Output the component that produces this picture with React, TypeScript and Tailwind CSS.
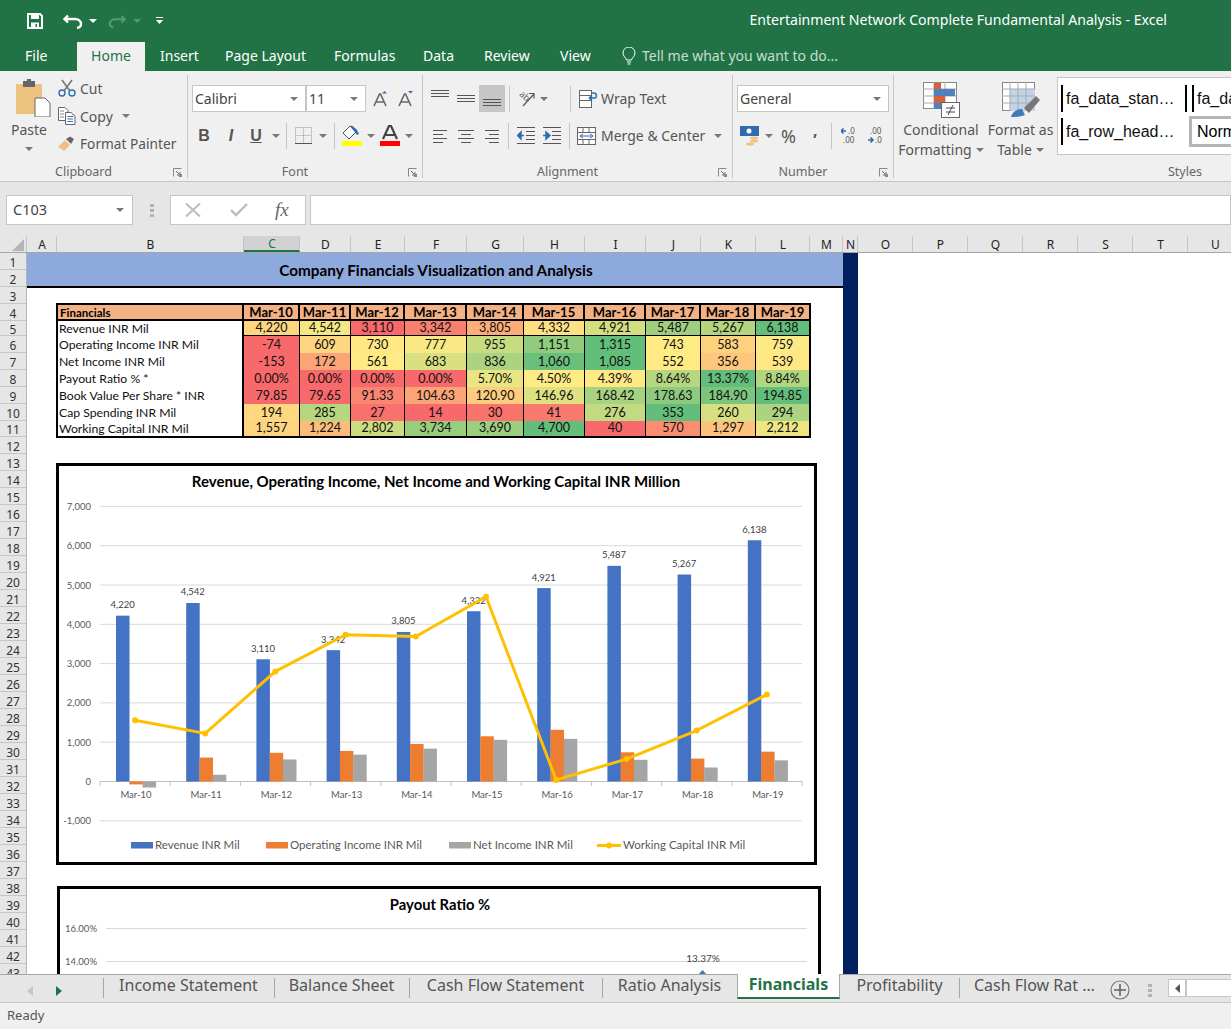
import React from "react";

const Caret = ({ c = "#777" }: { c?: string }) => (
  <svg width="8" height="4" viewBox="0 0 8 4" className="shrink-0"><path d="M0 0h8L4 4z" fill={c} /></svg>
);
const Sep = ({ h = "h-[26px]" }: { h?: string }) => <div className={`w-[1px] bg-[#c6c6c6] ${h}`} />;

const Launcher = () => (
  <svg width="9" height="9" viewBox="0 0 9 9"><path d="M0.5 8.5V0.5H8.5" fill="none" stroke="#888" /><path d="M3 3L7 7M7 4V7H4" fill="none" stroke="#666" /><rect x="6" y="6" width="3" height="3" fill="#888" /></svg>
);

const Group = ({ w, label, launcher = true, children }: { w: string; label: string; launcher?: boolean; children: React.ReactNode }) => (
  <div className={`flex flex-col shrink-0 relative ${w}`}>
    <div className="h-[91px]">{children}</div>
    <div className="h-[20px] flex items-center text-[12.5px] text-[#666] pt-[3px]">
      <span className="flex-1 text-center">{label}</span>
      {launcher && <span className="w-[20px] flex justify-center"><Launcher /></span>}
    </div>
  </div>
);

const RibbonSep = () => <div className="w-[1px] shrink-0 bg-[#c6c6c6] mt-[4px] h-[103px]" />;

const Combo = ({ w, text }: { w: string; text: string }) => (
  <div className={`h-[27px] bg-white border border-[#c6c6c6] flex items-center pl-[2px] pr-[7px] justify-between text-[14px] text-[#444] ${w}`}>
    <span>{text}</span>
    <Caret />
  </div>
);

const Lines = ({ ys, x1, x2 }: { ys: number[]; x1: number[]; x2: number[] }) => (
  <>
    {ys.map((y, i) => (
      <path key={i} d={`M${x1[i]} ${y + 0.5}H${x2[i]}`} stroke="#555" strokeWidth="1" />
    ))}
  </>
);

const AlignV = ({ ys }: { ys: number[] }) => (
  <svg width="18" height="18" viewBox="0 0 18 18"><Lines ys={ys} x1={[0, 0, 0]} x2={[18, 18, 18]} /></svg>
);
const AlignH = ({ x1, x2, w }: { x1: number[]; x2: number[]; w: number }) => (
  <svg width={w} height="14" viewBox={`0 0 ${w} 14`}><Lines ys={[1, 5, 9, 13]} x1={x1} x2={x2} /></svg>
);
const Indent = ({ flip }: { flip?: boolean }) => (
  <svg width="18" height="17" viewBox="0 0 18 17">
    <path d="M0 0.5H18M9 4.5H18M9 8.5H18M9 12.5H18M0 16.5H18" stroke="#555" fill="none" />
    {flip ? <path d="M0 8.5H5M3 5L7 8.5L3 12Z" stroke="#2f6db0" fill="#2f6db0" strokeWidth="1.5" /> : <path d="M7 8.5H2M4 5L0.5 8.5L4 12Z" stroke="#2f6db0" fill="#2f6db0" strokeWidth="1.5" />}
  </svg>
);

const Mono = "font-['Lato',sans-serif]";

const rows: { label: string; vals: number[]; text: string[] }[] = [
  { label: "Revenue INR Mil", vals: [4220, 4542, 3110, 3342, 3805, 4332, 4921, 5487, 5267, 6138], text: ["4,220", "4,542", "3,110", "3,342", "3,805", "4,332", "4,921", "5,487", "5,267", "6,138"] },
  { label: "Operating Income INR Mil", vals: [-74, 609, 730, 777, 955, 1151, 1315, 743, 583, 759], text: ["-74", "609", "730", "777", "955", "1,151", "1,315", "743", "583", "759"] },
  { label: "Net Income INR Mil", vals: [-153, 172, 561, 683, 836, 1060, 1085, 552, 356, 539], text: ["-153", "172", "561", "683", "836", "1,060", "1,085", "552", "356", "539"] },
  { label: "Payout Ratio % *", vals: [0, 0, 0, 0, 5.7, 4.5, 4.39, 8.64, 13.37, 8.84], text: ["0.00%", "0.00%", "0.00%", "0.00%", "5.70%", "4.50%", "4.39%", "8.64%", "13.37%", "8.84%"] },
  { label: "Book Value Per Share * INR", vals: [79.85, 79.65, 91.33, 104.63, 120.9, 146.96, 168.42, 178.63, 184.9, 194.85], text: ["79.85", "79.65", "91.33", "104.63", "120.90", "146.96", "168.42", "178.63", "184.90", "194.85"] },
  { label: "Cap Spending INR Mil", vals: [194, 285, 27, 14, 30, 41, 276, 353, 260, 294], text: ["194", "285", "27", "14", "30", "41", "276", "353", "260", "294"] },
  { label: "Working Capital INR Mil", vals: [1557, 1224, 2802, 3734, 3690, 4700, 40, 570, 1297, 2212], text: ["1,557", "1,224", "2,802", "3,734", "3,690", "4,700", "40", "570", "1,297", "2,212"] },
];

const mix = (a: number[], b: number[], t: number) => {
  const c = a.map((v, i) => Math.round(v + (b[i] - v) * t));
  return `rgb(${c[0]},${c[1]},${c[2]})`;
};
const scale = (vals: number[], v: number) => {
  const s = [...vals].sort((x, y) => x - y);
  const min = s[0], max = s[s.length - 1], med = (s[4] + s[5]) / 2;
  const R = [248, 105, 107], Y = [255, 235, 132], G = [99, 190, 123];
  return v <= med ? mix(R, Y, (v - min) / (med - min || 1)) : mix(Y, G, (v - med) / (max - med || 1));
};

const years = ["Mar-10", "Mar-11", "Mar-12", "Mar-13", "Mar-14", "Mar-15", "Mar-16", "Mar-17", "Mar-18", "Mar-19"];
const cols: [string, number][] = [["A", 30], ["B", 187], ["C", 56], ["D", 51], ["E", 54], ["F", 62], ["G", 57], ["H", 61], ["I", 61], ["J", 55], ["K", 55], ["L", 54], ["M", 33], ["N", 15], ["O", 55], ["P", 55], ["Q", 55], ["R", 55], ["S", 55], ["T", 55], ["U", 55]];
const rowHeights = Array.from({ length: 43 }, (_, i) => (i === 4 ? 15 : i === 10 ? 16 : 17));
const gridCols = "grid grid-cols-[186px_56px_51px_54px_62px_57px_61px_61px_55px_55px_53px]";

const Y = (v: number) => 781.5 - v * 0.0393;
const catX = (i: number) => 100 + 70.2 * i;

const Chart1 = () => {
  const rev = rows[0], op = rows[1], net = rows[2], wc = rows[6];
  const bar = (i: number, v: number, off: number, c: string, w = 13.5) => (
    <rect key={`${c}${i}`} x={catX(i) + off} y={Math.min(Y(v), Y(0))} width={w} height={Math.abs(v * 0.0393)} fill={c} />
  );
  const pts = wc.vals.map((v, i) => `${catX(i) + 35},${Y(v)}`).join(" ");
  return (
    <svg width="755" height="396" viewBox="59 466 755 396" className={`block ${Mono}`}>
      <text x="436" y="487" textAnchor="middle" fontSize="15" fontWeight="700" fill="#000">Revenue, Operating Income, Net Income and Working Capital INR Million</text>
      {[7000, 6000, 5000, 4000, 3000, 2000, 1000, 0, -1000].map((v) => (
        <g key={v}>
          <path d={`M100 ${Y(v)}H802`} stroke={v === 0 ? "#bfbfbf" : "#d9d9d9"} strokeWidth="1" />
          <text x="91" y={Y(v) + 3.5} textAnchor="end" fontSize="9.5" fill="#595959">{v < 0 ? "-1,000" : v === 0 ? "0" : `${v / 1000},000`}</text>
        </g>
      ))}
      {Array.from({ length: 11 }, (_, i) => <path key={i} d={`M${catX(i)} 781.5V786`} stroke="#bfbfbf" />)}
      {rev.vals.map((v, i) => bar(i, v, 16, "#4472c4"))}
      {op.vals.map((v, i) => bar(i, v, 29.3, "#ed7d31"))}
      {net.vals.map((v, i) => bar(i, v, 42.6, "#a5a5a5"))}
      {years.map((y, i) => <text key={y} x={catX(i) + 36} y="798" textAnchor="middle" fontSize="9.5" fill="#595959">{y}</text>)}
      {rev.vals.map((v, i) => <text key={i} x={catX(i) + 22.6} y={Y(v) - 7.5} textAnchor="middle" fontSize="9.5" fill="#404040">{rev.text[i]}</text>)}
      <polyline points={pts} fill="none" stroke="#ffc000" strokeWidth="3" strokeLinejoin="round" strokeLinecap="round" />
      {wc.vals.map((v, i) => <circle key={i} cx={catX(i) + 35} cy={Y(v)} r="3" fill="#ffc000" />)}
      <rect x="131" y="842" width="22" height="6.5" fill="#4472c4" />
      <text x="155" y="849" fontSize="11.5" fill="#595959">Revenue INR Mil</text>
      <rect x="266" y="842" width="22" height="6.5" fill="#ed7d31" />
      <text x="290" y="849" fontSize="11.5" fill="#595959">Operating Income INR Mil</text>
      <rect x="449" y="842" width="22" height="6.5" fill="#a5a5a5" />
      <text x="473" y="849" fontSize="11.5" fill="#595959">Net Income INR Mil</text>
      <path d="M597 845.5H621" stroke="#ffc000" strokeWidth="3" />
      <circle cx="609" cy="845.5" r="3" fill="#ffc000" />
      <text x="623" y="849" fontSize="11.5" fill="#595959">Working Capital INR Mil</text>
    </svg>
  );
};

const Chart2 = () => (
  <svg width="758" height="200" viewBox="60 889 758 200" className={`block ${Mono}`}>
    <text x="440" y="910" textAnchor="middle" fontSize="14.8" fontWeight="700" fill="#000">Payout Ratio %</text>
    {[[928.5, "16.00%"], [961.5, "14.00%"]].map(([y, t]) => (
      <g key={t as string}>
        <path d={`M106 ${y}H807`} stroke="#d9d9d9" />
        <text x="97" y={(y as number) + 3.5} textAnchor="end" fontSize="9.5" fill="#595959">{t}</text>
      </g>
    ))}
    <text x="703" y="961.5" textAnchor="middle" fontSize="10" fill="#404040">13.37%</text>
    <path d="M702.5 970L708 976L702.5 982L697 976Z" fill="#4472c4" />
  </svg>
);

const tabs: [string, string][] = [["Income Statement", "w-[171px]"], ["Balance Sheet", "w-[135px]"], ["Cash Flow Statement", "w-[193px]"], ["Ratio Analysis", "w-[135px]"]];

export default function App() {
  return (
    <div className="w-[1231px] h-[1029px] overflow-hidden flex flex-col bg-[#e6e6e6] font-['Noto_Sans',sans-serif] text-[14px] text-[#444]">
      {/* Title bar */}
      <div className="h-[42px] shrink-0 bg-[#217346] flex items-center pl-[27px] pr-[64px] text-white">
        <svg width="16" height="16" viewBox="0 0 16 16" className="shrink-0">
          <path d="M1 1H13L15 3V15H1Z" fill="none" stroke="#fff" strokeWidth="2" />
          <rect x="4" y="1" width="8" height="5" fill="#fff" />
          <rect x="4" y="9.5" width="8" height="5" fill="#fff" />
          <rect x="8.5" y="11" width="1.5" height="3" fill="#217346" />
        </svg>
        <svg width="20" height="15" viewBox="0 0 20 15" className="ml-[20px] shrink-0">
          <path d="M5 1.5L1.5 5L5 8.5M2 5H12C15.5 5 18 7 18 10C18 12 16.5 13.5 14 14" fill="none" stroke="#fff" strokeWidth="2.4" />
        </svg>
        <span className="ml-[6px]"><Caret c="#fff" /></span>
        <svg width="18" height="15" viewBox="0 0 20 15" className="ml-[11px] shrink-0">
          <path d="M15 1.5L18.5 5L15 8.5M18 5H8C4.5 5 2 7 2 10C2 12 3.5 13.5 6 14" fill="none" stroke="#4f9a74" strokeWidth="2.4" />
        </svg>
        <span className="ml-[7px]"><Caret c="#4f9a74" /></span>
        <svg width="7" height="8" viewBox="0 0 7 8" className="ml-[15px] shrink-0"><path d="M0 0.5H7" stroke="#fff" /><path d="M0 3H7L3.5 7Z" fill="#fff" /></svg>
        <span className="ml-auto text-[14.1px] -mt-[3px]">Entertainment Network Complete Fundamental Analysis - Excel</span>
      </div>
      {/* Menu tabs */}
      <div className="h-[29px] shrink-0 bg-[#217346] flex text-[14px] text-white">
        <span className="w-[77px] pl-[25px] pt-[3px]">File</span>
        <span className="w-[68px] bg-[#f0f0f0] text-[#217346] text-center pt-[3px]">Home</span>
        <span className="w-[80px] pl-[15px] pt-[3px]">Insert</span>
        <span className="w-[109px] pt-[3px]">Page Layout</span>
        <span className="w-[89px] pt-[3px]">Formulas</span>
        <span className="w-[61px] pt-[3px]">Data</span>
        <span className="w-[76px] pt-[3px]">Review</span>
        <span className="w-[62px] pt-[3px]">View</span>
        <svg width="14" height="20" viewBox="0 0 14 20" className="mt-[5px] shrink-0">
          <path d="M4.5 13C4 10.5 1 9.5 1 6A6 6 0 0 1 13 6C13 9.5 10 10.5 9.5 13Z" fill="none" stroke="#fff" />
          <path d="M5 15H9M5.5 17H8.5" stroke="#fff" />
        </svg>
        <span className="ml-[6px] pt-[3px] text-[#c8ddd2]">Tell me what you want to do...</span>
      </div>
      {/* Ribbon */}
      <div className="h-[111px] shrink-0 bg-[#f0f0f0] border-b border-[#c6c6c6] flex overflow-hidden">
        <Group w="w-[187px]" label="Clipboard">
          <div className="flex">
            <div className="w-[58px] flex flex-col items-center pt-[8px]">
              <svg width="36" height="38" viewBox="0 0 36 38" className="shrink-0 ml-[8px]">
                <path d="M1 5H27V35H1Z" fill="#edc27f" />
                <path d="M8 2H20V8H8Z" fill="#666" />
                <path d="M12 0H16V3H12Z" fill="#666" />
                <path d="M20 19H30L35 24V38H20Z" fill="#fff" stroke="#666" />
              </svg>
              <span className="mt-[4px] leading-[18px] text-[#555]">Paste</span>
              <span className="mt-[8px]"><Caret /></span>
            </div>
            <div className="flex flex-col pt-[3px]">
              <div className="h-[28px] flex items-center">
                <svg width="18" height="18" viewBox="0 0 18 18" className="shrink-0 mr-[4px]">
                  <path d="M4 1L12 12M14 1L6 12" stroke="#777" strokeWidth="1.6" />
                  <circle cx="4" cy="14" r="3" fill="none" stroke="#2f6db0" strokeWidth="1.4" />
                  <circle cx="14" cy="14" r="3" fill="none" stroke="#2f6db0" strokeWidth="1.4" />
                </svg>
                <span className="text-[#555]">Cut</span>
              </div>
              <div className="h-[28px] flex items-center">
                <svg width="18" height="18" viewBox="0 0 18 18" className="shrink-0 mr-[4px]">
                  <path d="M0.5 0.5H7L10 3.5V13.5H0.5Z" fill="#fff" stroke="#666" />
                  <path d="M7.5 5.5H13L17 9V17.5H7.5Z" fill="#fff" stroke="#666" />
                  <path d="M9.5 9.5H15M9.5 12H15M9.5 14.5H15" stroke="#2f6db0" />
                  <path d="M2 4H6M2 7H6M2 10H6" stroke="#888" />
                </svg>
                <span className="text-[#555]">Copy</span>
                <span className="ml-[9px]"><Caret /></span>
              </div>
              <div className="h-[28px] flex items-center">
                <svg width="18" height="16" viewBox="0 0 18 16" className="shrink-0 mr-[4px]">
                  <path d="M0 11L7 4L12 9L6 15C4 13 2 12 0 11Z" fill="#edc27f" />
                  <path d="M8 3L12 0.5L16 3L13 8Z" fill="#666" />
                </svg>
                <span className="text-[#555] text-[13.7px]">Format Painter</span>
              </div>
            </div>
          </div>
        </Group>
        <RibbonSep />
        <Group w="w-[234px]" label="Font">
          <div className="pl-[4px] pt-[14px]">
            <div className="flex items-center">
              <Combo w="w-[114px]" text="Calibri" />
              <Combo w="w-[60px]" text="11" />
              <svg width="16" height="16" viewBox="0 0 16 16" className="ml-[7px] shrink-0">
                <path d="M1 15L6.5 3H7.5L13 15M3.5 11H10.5" fill="none" stroke="#666" strokeWidth="1.6" />
                <path d="M9 2.5L11.5 0L14 2.5Z" fill="#2f6db0" />
              </svg>
              <svg width="16" height="16" viewBox="0 0 16 16" className="ml-[9px] shrink-0">
                <path d="M1 15L6.5 3H7.5L13 15M3.5 11H10.5" fill="none" stroke="#666" strokeWidth="1.6" />
                <path d="M10 0L12.5 2.5L15 0Z" fill="#2f6db0" />
              </svg>
            </div>
            <div className="flex items-center mt-[10px] h-[27px]">
              <span className="w-[24px] text-center font-bold text-[16px] text-[#555] font-['Liberation_Sans',sans-serif]">B</span>
              <span className="w-[30px] text-center italic font-bold text-[16px] text-[#555] font-['Liberation_Sans',sans-serif]">I</span>
              <span className="w-[20px] text-center font-bold underline text-[16px] text-[#555] font-['Liberation_Sans',sans-serif]">U</span>
              <span className="w-[20px] flex justify-center"><Caret /></span>
              <Sep />
              <svg width="17" height="17" viewBox="0 0 17 17" className="ml-[8px] shrink-0">
                <rect x="0.5" y="0.5" width="16" height="16" fill="none" stroke="#999" strokeDasharray="1 1" />
                <path d="M0.5 8.5H16.5M8.5 0.5V16.5" stroke="#999" strokeDasharray="1 1" />
                <path d="M0 16.5H17" stroke="#555" />
              </svg>
              <span className="w-[22px] flex justify-center"><Caret /></span>
              <Sep />
              <svg width="20" height="21" viewBox="0 0 20 21" className="ml-[7px] shrink-0">
                <path d="M1 8L8 1L14 7L7 14Z" fill="#fff" stroke="#555" />
                <path d="M8 1C10 0 12 2 15 5L17 9L15 10Z" fill="#2f6db0" />
                <rect x="0" y="16" width="20" height="5" fill="#ffff00" />
              </svg>
              <span className="w-[18px] flex justify-center"><Caret /></span>
              <svg width="20" height="21" viewBox="0 0 20 21" className="shrink-0">
                <path d="M3 14L9 1H11L17 14M5.5 10H14.5" fill="none" stroke="#444" strokeWidth="2.2" />
                <rect x="0" y="16" width="20" height="5" fill="#ff0000" />
              </svg>
              <span className="w-[18px] flex justify-center"><Caret /></span>
            </div>
          </div>
        </Group>
        <RibbonSep />
        <Group w="w-[309px]" label="Alignment">
          <div className="pl-[8px] pt-[14px]">
            <div className="flex items-center h-[27px]">
              <AlignV ys={[0, 3, 6]} />
              <span className="ml-[8px]"><AlignV ys={[5, 8, 11]} /></span>
              <span className="ml-[4px] w-[26px] h-[27px] bg-[#c6c6c6] flex items-center justify-center"><AlignV ys={[9, 12, 15]} /></span>
              <span className="ml-[4px]"><Sep /></span>
              <svg width="19" height="18" viewBox="0 0 19 18" className="ml-[7px] shrink-0">
                <text x="2" y="8" fontSize="9" fill="#666" transform="rotate(40 6 6)">ab</text>
                <path d="M6 16L17 4M12 3.5H17V8.5" fill="none" stroke="#555" strokeWidth="1.2" />
              </svg>
              <span className="w-[16px] flex justify-center"><Caret /></span>
              <span className="ml-[18px]"><Sep /></span>
              <svg width="19" height="18" viewBox="0 0 19 18" className="ml-[8px] shrink-0">
                <rect x="0.5" y="0.5" width="12" height="17" fill="#fff" stroke="#666" />
                <path d="M0 5.5H12M0 10.5H12" stroke="#666" />
                <path d="M10 8H16C18 8 18 3 15 3H12M10 8L13 5.5M10 8L13 10.5" fill="none" stroke="#2f6db0" strokeWidth="1.5" />
              </svg>
              <span className="ml-[3px] text-[#555]">Wrap Text</span>
            </div>
            <div className="flex items-center mt-[10px] h-[27px]">
              <span className="ml-[2px]"><AlignH w={14} x1={[0, 0, 0, 0]} x2={[14, 10, 14, 10]} /></span>
              <span className="ml-[11px]"><AlignH w={16} x1={[0, 3, 0, 3]} x2={[16, 13, 16, 13]} /></span>
              <span className="ml-[11px]"><AlignH w={14} x1={[0, 4, 0, 4]} x2={[14, 14, 14, 14]} /></span>
              <span className="ml-[9px]"><Sep /></span>
              <span className="ml-[8px]"><Indent /></span>
              <span className="ml-[8px]"><Indent flip /></span>
              <span className="ml-[8px]"><Sep /></span>
              <svg width="19" height="18" viewBox="0 0 19 18" className="ml-[7px] shrink-0">
                <rect x="0.5" y="0.5" width="18" height="17" fill="#fff" stroke="#666" />
                <path d="M0 5.5H18M0 12.5H18M6 0V5M12 0V5M6 13V18M12 13V18" stroke="#666" />
                <path d="M3 9H16M6 7L3 9L6 11M13 7L16 9L13 11" fill="none" stroke="#2f6db0" />
              </svg>
              <span className="ml-[5px] text-[#555]">Merge &amp; Center</span>
              <span className="ml-[9px]"><Caret /></span>
            </div>
          </div>
        </Group>
        <RibbonSep />
        <Group w="w-[160px]" label="Number">
          <div className="pl-[4px] pt-[14px]">
            <Combo w="w-[152px]" text="General" />
            <div className="flex items-center mt-[10px] h-[27px] pl-[3px]">
              <svg width="19" height="20" viewBox="0 0 19 20" className="shrink-0">
                <rect x="0" y="0" width="19" height="10" fill="#2f6db0" />
                <circle cx="9" cy="5" r="2.5" fill="#fff" />
                <ellipse cx="14" cy="12" rx="4" ry="1.5" fill="#edc27f" />
                <ellipse cx="14" cy="15" rx="4" ry="1.5" fill="#edc27f" />
                <ellipse cx="10" cy="18" rx="4" ry="1.5" fill="#edc27f" />
              </svg>
              <span className="w-[20px] flex justify-center"><Caret /></span>
              <span className="ml-[2px] w-[16px] text-[18px] text-[#555] leading-none">%</span>
              <span className="ml-[16px] w-[6px] font-bold text-[#555] leading-none text-[16px] -mt-[12px]">,</span>
              <span className="ml-[12px]"><Sep /></span>
              <svg width="16" height="20" viewBox="0 0 16 20" className="ml-[9px] shrink-0">
                <path d="M5 5H0M2.5 2.5L0 5L2.5 7.5" fill="none" stroke="#2f6db0" strokeWidth="1.6" />
                <text x="7" y="8" fontSize="8" fill="#555">.0</text>
                <text x="2" y="17" fontSize="8" fill="#555">.00</text>
              </svg>
              <svg width="16" height="20" viewBox="0 0 16 20" className="ml-[10px] shrink-0">
                <text x="3" y="8" fontSize="8" fill="#555">.00</text>
                <path d="M1 14H6M3.5 11.5L6 14L3.5 16.5" fill="none" stroke="#2f6db0" strokeWidth="1.6" />
                <text x="8" y="17" fontSize="8" fill="#555">.0</text>
              </svg>
            </div>
          </div>
        </Group>
        <RibbonSep />
        <Group w="w-[582px]" label="Styles" launcher={false}>
          <div className="flex">
            <div className="w-[94px] flex flex-col items-center pt-[11px] text-center text-[#555] leading-[20px]">
              <svg width="37" height="36" viewBox="0 0 37 36" className="shrink-0">
                <rect x="0.5" y="0.5" width="33" height="26" fill="#fff" stroke="#888" />
                <path d="M0 7H33M0 14H33M0 21H33M11 0V27M22 0V27" stroke="#aaa" />
                <rect x="11" y="1" width="7" height="6" fill="#d9603e" />
                <rect x="11" y="7" width="21" height="7" fill="#4e81bd" />
                <rect x="11" y="14" width="11" height="7" fill="#d9603e" />
                <rect x="11" y="21" width="7" height="6" fill="#4e81bd" />
                <rect x="18.5" y="20.5" width="18" height="15" fill="#fff" stroke="#666" />
                <path d="M23 26H32M23 30H32M30 23L25 33" stroke="#444" />
              </svg>
              <span className="mt-[2px]">Conditional</span>
              <span className="flex items-center gap-[4px]">Formatting <Caret /></span>
            </div>
            <div className="w-[65px] flex flex-col items-center pt-[11px] text-center text-[#555] leading-[20px] whitespace-nowrap">
              <svg width="38" height="36" viewBox="0 0 38 36" className="shrink-0">
                <rect x="0.5" y="0.5" width="32" height="28" fill="#fff" stroke="#888" />
                <rect x="8" y="7" width="25" height="22" fill="#c2d4ea" />
                <path d="M0 7H33M0 14H33M0 21H33M8 0V29M16 0V29M24 0V29" stroke="#aaa" />
                <path d="M9 35C10 30 15 27 20 27L23 33C18 35 13 35 9 35Z" fill="#3f7ab8" />
                <path d="M22 26L34 14L38 18L27 31Z" fill="#777" />
              </svg>
              <span className="mt-[2px]">Format as</span>
              <span className="flex items-center gap-[4px]">Table <Caret /></span>
            </div>
            <div className="ml-[4px] mt-[6px] w-[200px] h-[78px] bg-white border border-[#c6c6c6] pl-[3px] font-['Liberation_Sans',sans-serif] text-[16px] text-[#111]">
              <div className="flex mt-[7px] h-[27px] items-center">
                <span className="w-[124px] h-[27px] border-l-2 border-black pl-[3px] leading-[27px] whitespace-nowrap">fa_data_stan…</span>
                <span className="w-[7px] h-[27px] border-l-2 border-black" />
                <span className="h-[27px] border-l-2 border-black pl-[3px] leading-[27px]">fa_da</span>
              </div>
              <div className="flex mt-[6px] h-[27px] items-center">
                <span className="w-[128px] h-[27px] border-l-2 border-black pl-[3px] leading-[27px] whitespace-nowrap">fa_row_head…</span>
                <span className="w-[60px] h-[31px] border-[3px] border-[#b5b5b5] pl-[5px] leading-[25px] text-black">Norm</span>
              </div>
            </div>
          </div>
        </Group>
      </div>
      {/* Formula bar */}
      <div className="h-[54px] shrink-0 pt-[13px] pl-[6px] flex">
        <div className="w-[127px] h-[30px] bg-white border border-[#c6c6c6] flex items-center justify-between pl-[6px] pr-[8px] text-[14.5px]">
          <span>C103</span>
          <Caret />
        </div>
        <div className="w-[37px] h-[30px] flex items-center justify-center">
          <svg width="4" height="15" viewBox="0 0 4 15"><path d="M0 1h4v3H0zM0 6h4v3H0zM0 11h4v3H0z" fill="#b3b3b3" /></svg>
        </div>
        <div className="w-[136px] h-[30px] bg-white border border-[#c6c6c6] flex items-center">
          <svg width="16" height="14" viewBox="0 0 16 14" className="ml-[14px] shrink-0"><path d="M1 0.5L15 13.5M15 0.5L1 13.5" stroke="#bdbdbd" strokeWidth="2" /></svg>
          <svg width="18" height="14" viewBox="0 0 18 14" className="ml-[29px] shrink-0"><path d="M1 7L6 12L17 1" fill="none" stroke="#bdbdbd" strokeWidth="2.4" /></svg>
          <span className="ml-[27px] italic font-['Liberation_Serif',serif] text-[19px] text-[#666]">fx</span>
        </div>
        <div className="ml-[4px] flex-1 h-[30px] bg-white border border-[#c6c6c6]" />
      </div>
      {/* Column headers */}
      <div className="h-[17px] shrink-0 flex border-b border-[#a6a6a6] text-[12px] text-[#222]">
        <div className="w-[27px] shrink-0 flex items-end justify-end pb-[1px] pr-[2px] border-r border-[#c6c6c6]">
          <svg width="12" height="12" viewBox="0 0 12 12"><path d="M12 0V12H0Z" fill="#b5b5b5" /></svg>
        </div>
        {cols.map(([c, w]) => (
          <div
            key={c}
            style={{ width: w }}
            className={`shrink-0 flex items-center justify-center leading-none pl-[1px] pt-[1px] ${c === "C" ? "bg-[#d2d2d2] text-[#217346] border-b-2 border-[#217346] border-r border-r-[#c6c6c6]" : "border-r border-[#c6c6c6]"}`}
          >
            {c}
          </div>
        ))}
      </div>
      {/* Sheet */}
      <div className="h-[721px] shrink-0 flex overflow-hidden bg-white">
        <div className="w-[27px] shrink-0 flex flex-col bg-[#e6e6e6] border-r border-[#b5b5b5] text-[12px] text-[#333]">
          {rowHeights.map((h, i) => (
            <div key={i} style={{ height: h }} className="shrink-0 flex items-center justify-center border-b border-[#c6c6c6] leading-none pt-[3px]">
              {i + 1}
            </div>
          ))}
        </div>
        <div className="w-[816px] shrink-0 bg-white font-['Lato',sans-serif] text-[#111]">
          <div className="h-[35px] bg-[#8ea9db] border-b-2 border-black flex items-center justify-center pl-[2px] pt-[1px] font-bold text-[15.3px] text-black">
            Company Financials Visualization and Analysis
          </div>
          <div className="ml-[29px] mt-[15px] w-[755px] border-2 border-black">
            <div className={`${gridCols} h-[16px] bg-[#f4b183] border-b-2 border-black text-black`}>
              <div className="border-r-2 border-black pl-[2px] text-[11.5px] font-bold leading-[16px]">Financials</div>
              {years.map((y, i) => (
                <div key={y} className={`text-center text-[13px] font-bold leading-[15px] ${i < 9 ? "border-r-2 border-black" : ""}`}>{y}</div>
              ))}
            </div>
            {rows.map((r, ri) => {
              const short = ri === 0 || ri === 6;
              return (
                <div key={r.label} className={`${gridCols} ${short ? "h-[15px]" : "h-[17px]"}`}>
                  <div className={`border-r-2 border-black pl-[1px] text-[12.2px] whitespace-nowrap ${short ? "leading-[15px]" : "leading-[17px]"}`}>{r.label}</div>
                  {r.text.map((t, i) => (
                    <div
                      key={i}
                      style={{ backgroundColor: scale(r.vals, r.vals[i]) }}
                      className={`text-center text-[12.5px] ${short ? "leading-[14px]" : "leading-[17px]"} ${i < 9 ? "border-r border-black" : ""} ${ri < 6 ? "border-b border-black" : ""}`}
                    >
                      {t}
                    </div>
                  ))}
                </div>
              );
            })}
          </div>
          <div className="ml-[29px] mt-[25px] w-[761px] h-[402px] border-[3px] border-black">
            <Chart1 />
          </div>
          <div className="ml-[30px] mt-[21px] w-[764px] h-[206px] border-[3px] border-black">
            <Chart2 />
          </div>
        </div>
        <div className="w-[15px] shrink-0 bg-[#002060]" />
        <div className="flex-1 bg-white" />
      </div>
      {/* Sheet tabs */}
      <div className="h-[29px] shrink-0 border-t border-[#a6a6a6] border-b border-b-[#c6c6c6] flex text-[16px] text-[#555]">
        <div className="w-[103px] shrink-0 flex items-center pl-[27px] gap-[23px] h-[28px] pt-[3px]">
          <svg width="6" height="10" viewBox="0 0 6 10"><path d="M6 0V10L0 5Z" fill="#c6c6c6" /></svg>
          <svg width="6" height="10" viewBox="0 0 6 10"><path d="M0 0V10L6 5Z" fill="#217346" /></svg>
        </div>
        {tabs.map(([t, w]) => (
          <div key={t} className={`${w} shrink-0 flex items-start justify-center leading-[20px] relative`}>
            <span className="absolute left-0 top-[3px] w-[1px] h-[20px] bg-[#a6a6a6]" />
            {t}
          </div>
        ))}
        <div className="w-[103px] shrink-0 h-[25px] -mt-[1px] bg-white border-x border-[#a6a6a6] border-b-2 border-b-[#217346] flex items-start justify-center leading-[21px] font-bold text-[#217346]">
          Financials
        </div>
        <div className="w-[119px] shrink-0 flex items-start justify-center leading-[20px]">Profitability</div>
        <div className="w-[148px] shrink-0 flex items-start pl-[15px] leading-[20px] relative whitespace-nowrap">
          <span className="absolute left-0 top-[3px] w-[1px] h-[20px] bg-[#a6a6a6]" />
          Cash Flow Rat …
        </div>
        <svg width="20" height="20" viewBox="0 0 20 20" className="shrink-0 mt-[5px] ml-[3px]">
          <circle cx="10" cy="10" r="9" fill="none" stroke="#777" strokeWidth="1.2" />
          <path d="M10 4V16M4 10H16" stroke="#666" strokeWidth="1.6" />
        </svg>
        <svg width="4" height="15" viewBox="0 0 4 15" className="shrink-0 mt-[8px] ml-[18px]"><path d="M0 1h4v3H0zM0 6h4v3H0zM0 11h4v3H0z" fill="#b3b3b3" /></svg>
        <div className="ml-[16px] mt-[4px] w-[18px] h-[18px] bg-white border border-[#c6c6c6] flex items-center justify-center shrink-0">
          <svg width="5" height="9" viewBox="0 0 5 9"><path d="M5 0V9L0 4.5Z" fill="#555" /></svg>
        </div>
        <div className="mt-[4px] w-[60px] h-[18px] bg-white border border-[#c6c6c6] shrink-0" />
      </div>
      {/* Status */}
      <div className="flex-1 bg-[#f0f0f0] pl-[7px] flex items-center text-[13px] text-[#555]">Ready</div>
    </div>
  );
}
